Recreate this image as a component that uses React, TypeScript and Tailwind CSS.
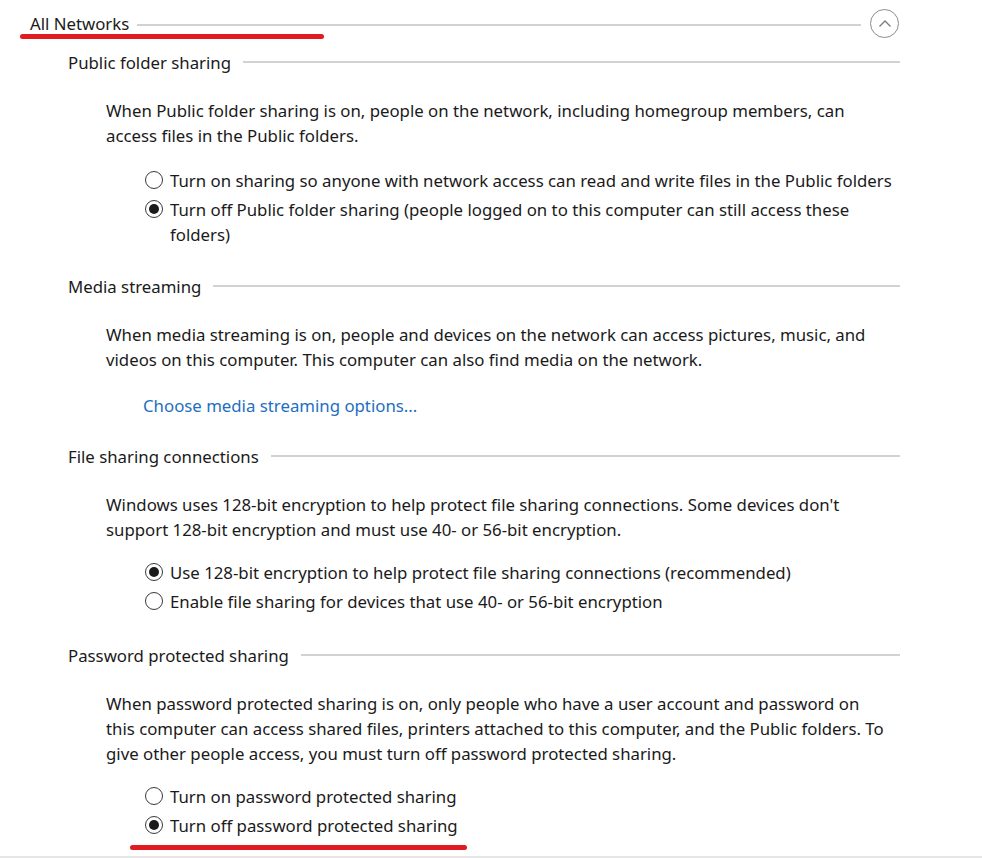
const Radio = ({ checked }: { checked?: boolean }) => (
  <span className="mt-[3.5px] mr-[7px] flex h-[18px] w-[18px] shrink-0 items-center justify-center rounded-full border border-[#3a3a3a] bg-white">
    {checked && <span className="h-[10px] w-[10px] rounded-full bg-[#1b1b1b]" />}
  </span>
);

const Option = ({ checked, lines }: { checked?: boolean; lines: string[] }) => (
  <div className="flex">
    <Radio checked={checked} />
    <div>
      {lines.map((l) => (
        <div key={l} className="whitespace-nowrap">
          {l}
        </div>
      ))}
    </div>
  </div>
);

const SectionHeader = ({ title }: { title: string }) => (
  <div className="flex items-center pl-[68px] pr-[82px]">
    <span className="whitespace-nowrap">{title}</span>
    <div className="ml-[12px] h-[2px] flex-1 bg-[#d2d2d2]" />
  </div>
);

const Para = ({ lines, className }: { lines: string[]; className?: string }) => (
  <div className={"pl-[106px] " + (className ?? "")}>
    {lines.map((l) => (
      <div key={l} className="whitespace-nowrap">
        {l}
      </div>
    ))}
  </div>
);

const App = () => {
  return (
    <div
      className="relative h-[858px] w-[982px] overflow-hidden bg-white text-[16.8px] leading-[25px] text-[#1a1a1a]"
      style={{ fontFamily: '"Segoe UI", "Noto Sans", sans-serif' }}
    >
      {/* All Networks header */}
      <div className="flex h-[46px] items-center pl-[30px] pr-[83px]">
        <span className="whitespace-nowrap">All Networks</span>
        <div className="ml-[8px] mr-[9px] mt-[4px] h-[2px] flex-1 bg-[#d2d2d2]" />
        <button className="flex h-[29px] w-[29px] items-center justify-center rounded-full border border-[#8c8c8c]">
          <svg width="14" height="9" viewBox="0 0 14 9" fill="none" stroke="#7a7a7a" strokeWidth="1.3">
            <path d="M1.5 7.5 L7 2 L12.5 7.5" />
          </svg>
        </button>
      </div>
      <div className="absolute left-[20px] top-[34px] h-[5px] w-[304px] rounded-full bg-[#e21b23]" />

      <div className="mt-[3.5px]">
        <SectionHeader title="Public folder sharing" />
        <Para
          className="mt-[23px]"
          lines={[
            "When Public folder sharing is on, people on the network, including homegroup members, can",
            "access files in the Public folders.",
          ]}
        />
        <div className="mt-[20px] flex flex-col gap-[4px] pl-[145px]">
          <Option lines={["Turn on sharing so anyone with network access can read and write files in the Public folders"]} />
          <Option
            checked
            lines={[
              "Turn off Public folder sharing (people logged on to this computer can still access these",
              "folders)",
            ]}
          />
        </div>

        <div className="mt-[27px]">
          <SectionHeader title="Media streaming" />
        </div>
        <Para
          className="mt-[23px]"
          lines={[
            "When media streaming is on, people and devices on the network can access pictures, music, and",
            "videos on this computer. This computer can also find media on the network.",
          ]}
        />
        <div className="mt-[21px] pl-[143px] text-[#1e6ec2]">Choose media streaming options...</div>

        <div className="mt-[26px]">
          <SectionHeader title="File sharing connections" />
        </div>
        <Para
          className="mt-[23px]"
          lines={[
            "Windows uses 128-bit encryption to help protect file sharing connections. Some devices don't",
            "support 128-bit encryption and must use 40- or 56-bit encryption.",
          ]}
        />
        <div className="mt-[18px] flex flex-col gap-[4px] pl-[145px]">
          <Option checked lines={["Use 128-bit encryption to help protect file sharing connections (recommended)"]} />
          <Option lines={["Enable file sharing for devices that use 40- or 56-bit encryption"]} />
        </div>

        <div className="mt-[29px]">
          <SectionHeader title="Password protected sharing" />
        </div>
        <Para
          className="mt-[23px]"
          lines={[
            "When password protected sharing is on, only people who have a user account and password on",
            "this computer can access shared files, printers attached to this computer, and the Public folders. To",
            "give other people access, you must turn off password protected sharing.",
          ]}
        />
        <div className="mt-[18px] flex flex-col gap-[4px] pl-[145px]">
          <Option lines={["Turn on password protected sharing"]} />
          <Option checked lines={["Turn off password protected sharing"]} />
        </div>
      </div>

      <div className="absolute left-[130px] top-[845px] h-[5px] w-[337px] rounded-full bg-[#e21b23]" />
      <div className="absolute bottom-0 left-0 h-[2px] w-full bg-[#e6e6e6]" />
    </div>
  );
};

export default App;
